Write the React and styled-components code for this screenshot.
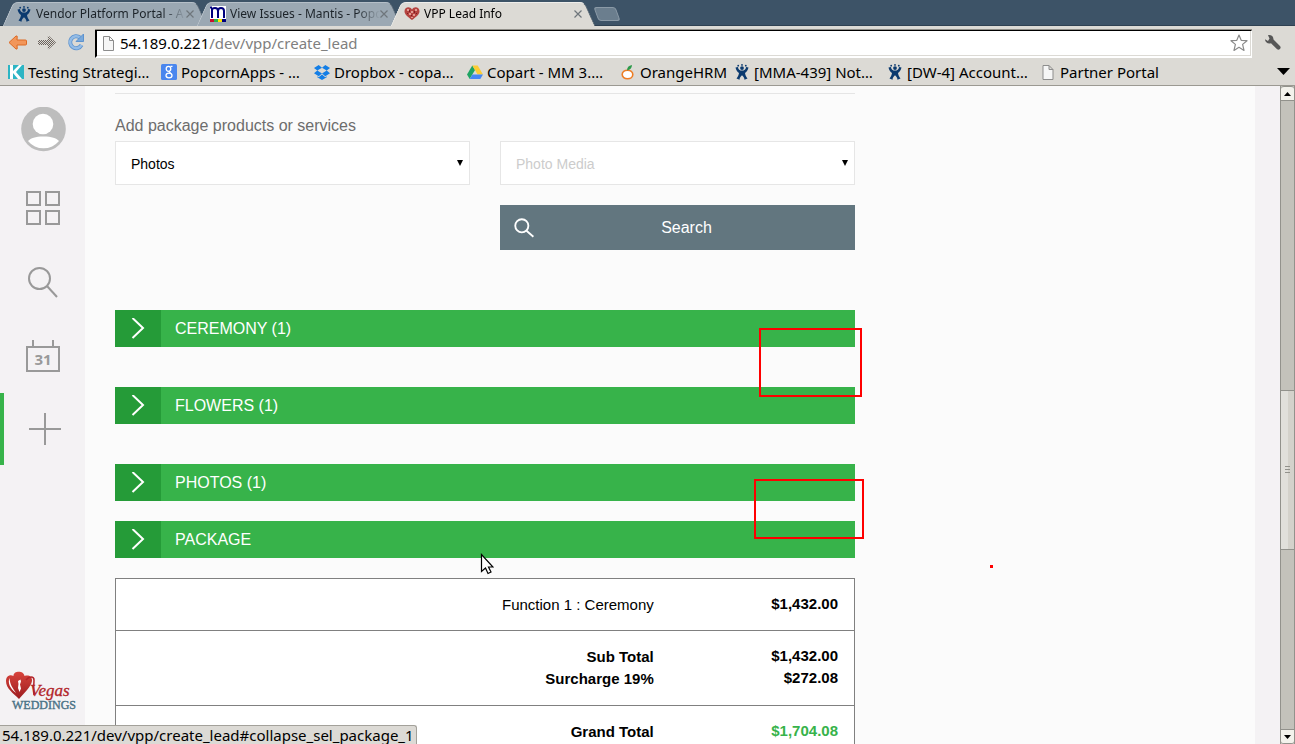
import React from "react";
import styled, { createGlobalStyle, css } from "styled-components";

const ui = '"Noto Sans", "Open Sans", sans-serif';
const body = '"Liberation Sans", Arial, sans-serif';
const chrome = "#dcdad5";
const green = "#37b34a";

const Global = createGlobalStyle`
  *, *::before, *::after { box-sizing: border-box; }
  body { margin: 0; overflow: hidden; font-family: ${body}; }
  button, select, input { font: inherit; margin: 0; }
  svg { display: block; flex: none; }
`;

const Browser = styled.div`
  position: relative;
  display: flex;
  flex-direction: column;
  height: 100vh;
  overflow: hidden;
  background: ${chrome};
`;

/* ---------- tab strip ---------- */
const TabStrip = styled.div`
  display: flex;
  align-items: flex-end;
  height: 26px;
  padding-left: 8px;
  background: #3d5367;
  border-bottom: 1px solid #2f4152;
`;

const Tab = styled.div`
  position: relative;
  z-index: ${(p) => (p.$active ? 2 : 1)};
  display: flex;
  align-items: center;
  width: 194px;
  height: 24px;
  margin-bottom: -1px;
  padding: 0 8px;
  font: 12px/22px ${ui};
  color: ${(p) => (p.$active ? "#000" : "#1c2329")};
  &::before,
  &::after {
    content: "";
    position: absolute;
    z-index: -1;
    top: 0;
    bottom: 0;
    width: 55%;
    background: ${(p) => (p.$active ? chrome : "#9ba8b3")};
    border-top: 1px solid ${(p) => (p.$active ? "#efeeeb" : "#b5bfc8")};
  }
  &::before {
    left: 0;
    transform: skewX(-24deg);
    border-left: 1px solid ${(p) => (p.$active ? "#efeeeb" : "#c3cbd2")};
    border-top-left-radius: 5px;
  }
  &::after {
    right: 0;
    transform: skewX(24deg);
    border-right: 1px solid ${(p) => (p.$active ? "#55636f" : "#5d6b78")};
    border-top-right-radius: 5px;
  }
`;

const TabTitle = styled.span`
  flex: 1;
  min-width: 0;
  margin-left: 4px;
  white-space: nowrap;
  mask-image: linear-gradient(to right, #000 84%, transparent);
`;

const CloseButton = styled.button`
  padding: 0;
  border: 0;
  background: none;
`;

const NewTab = styled.button`
  width: 22px;
  height: 14px;
  margin: 0 0 4px 6px;
  padding: 0;
  border: 1px solid #8b9aa7;
  border-radius: 3px;
  background: #6b7e8e;
  transform: skewX(20deg);
`;

/* ---------- toolbar ---------- */
const Toolbar = styled.div`
  display: flex;
  align-items: center;
  height: 32px;
  padding: 0 13px 0 8px;
`;

const ToolButton = styled.button`
  margin-right: ${(p) => p.$gap || 0}px;
  padding: 0;
  border: 0;
  background: none;
`;

const AddressBar = styled.div`
  display: flex;
  flex: 1;
  align-items: center;
  height: 28px;
  margin: 3px 12px 0 0;
  padding: 0 3px 0 5px;
  background: #fff;
  border-top: 1px solid #000;
  border-left: 2px solid #000;
  border-bottom: 2px solid #fff;
  border-right: 1px solid #fff;
  box-shadow: 0 -1px #8f8d87, inset 0 -1px #dcdad5, inset -1px 0 #dcdad5;
`;

const Url = styled.span`
  flex: 1;
  margin-left: 5px;
  font: 15px/22px ${ui};
  color: #808080;
`;

const Host = styled.span`
  color: #000;
`;

const Bookmarks = styled.nav`
  display: flex;
  align-items: center;
  height: 28px;
  padding: 0 5px 0 8px;
  border-bottom: 1px solid #9b9992;
`;

const Bookmark = styled.a`
  display: flex;
  align-items: center;
  gap: 4px;
  width: ${(p) => p.$width}px;
  font: 15px/22px ${ui};
  color: #000;
  text-decoration: none;
  white-space: nowrap;
`;

const MoreButton = styled.button`
  margin-left: auto;
  padding: 0;
  border: 0;
  background: none;
`;

/* ---------- page ---------- */
const Viewport = styled.div`
  position: relative;
  display: flex;
  flex: 1;
  min-height: 0;
  overflow: hidden;
  background: #f4f2f4;
`;

const Sidebar = styled.aside`
  display: flex;
  flex: none;
  flex-direction: column;
  width: 85px;
  padding: 21px 0 30px;
`;

const Avatar = styled.a`
  margin: 0 0 19px 21px;
`;

const SideNav = styled.nav`
  display: flex;
  flex-direction: column;
`;

const NavItem = styled.a`
  display: flex;
  align-items: center;
  height: 74px;
  padding-left: 25px;
  ${(p) =>
    p.$active &&
    css`
      height: 72px;
      padding-left: 21px;
      border-left: 4px solid ${green};
    `}
`;

const Logo = styled.a`
  margin: auto 0 0 5px;
`;

const Main = styled.main`
  flex: 1;
  min-width: 0;
  margin-right: 25px;
  padding: 7px 30px 0;
  background: #fbfbfb;
`;

const Column = styled.div`
  max-width: 740px;
`;

const Rule = styled.hr`
  height: 1px;
  margin: 0;
  border: 0;
  background: #e5e5e5;
`;

const Heading = styled.h2`
  margin: 22px 0 5px;
  font: 16px/20px ${body};
  color: #6d6d6d;
`;

const SearchForm = styled.form`
  display: grid;
  grid-template-columns: 1fr 1fr;
  gap: 20px 30px;
  margin-bottom: 60px;
`;

const SelectBox = styled.div`
  display: grid;
  align-items: center;
  & > * { grid-area: 1 / 1; }
  & > svg { justify-self: end; margin-right: 7px; pointer-events: none; }
`;

const Select = styled.select`
  width: 100%;
  height: 44px;
  padding: 2px 15px 0;
  appearance: none;
  border: 1px solid #e6e6e6;
  border-radius: 0;
  background: #fff;
  font-size: 14px;
  color: ${(p) => (p.$muted ? "#ccc" : "#000")};
`;

const SearchButton = styled.button`
  display: grid;
  grid-template-columns: 20px 1fr;
  grid-column: 2;
  align-items: center;
  height: 45px;
  padding: 1px 16px 0 14px;
  border: 0;
  background: #62767f;
  font-size: 16px;
  color: #fff;
`;

const Section = styled.button`
  display: flex;
  align-items: center;
  width: 100%;
  height: 37px;
  margin-bottom: ${(p) => (p.$tight ? 20 : 40)}px;
  padding: 0;
  border: 0;
  background: ${green};
  font-size: 16px;
  color: #fff;
`;

const SectionIcon = styled.span`
  display: flex;
  align-items: center;
  justify-content: center;
  width: 46px;
  height: 100%;
  margin-right: 14px;
  background: #259b38;
`;

const Totals = styled.table`
  width: 100%;
  border-collapse: collapse;
  background: #fff;
  border: 1px solid #808080;
  font-size: 15px;
  line-height: 22px;
  color: #000;
`;

const Group = styled.tbody`
  border-bottom: 1px solid #808080;
  & > tr:first-child > * { padding-top: 15px; }
  & > tr:last-child > * { padding-bottom: 15px; }
  & > tr:only-child > * { padding-bottom: 14px; }
`;

const LabelCell = styled.th`
  width: 75%;
  padding: 0 16px;
  text-align: right;
  font-weight: ${(p) => (p.$plain ? 400 : 700)};
`;

const ValueCell = styled.td`
  padding: 0 16px;
  vertical-align: top;
  text-align: right;
  font-weight: 700;
  line-height: 20px;
  color: ${(p) => (p.$total ? green : "#000")};
`;

/* ---------- scrollbar ---------- */
const Scrollbar = styled.div`
  display: flex;
  flex: none;
  flex-direction: column;
  width: 15px;
  border: solid #92928c;
  border-width: 0 1px;
  background: #c3c2bb;
`;

const ScrollButton = styled.button`
  display: flex;
  align-items: center;
  justify-content: center;
  height: 15px;
  padding: 0;
  border: 1px solid #92928c;
  border-width: 1px 0;
  border-radius: ${(p) => (p.$bottom ? "0 0 3px 3px" : "3px 3px 0 0")};
  background: #f3f2ec;
`;

const Track = styled.div`
  flex: ${(p) => p.$share};
`;

const Thumb = styled.div`
  display: flex;
  flex: 158;
  align-items: center;
  justify-content: center;
  border: 1px solid #92928c;
  border-width: 1px 0;
  background: linear-gradient(to right, #e1e0db 55%, #d4d2cb 55%);
`;

/* ---------- overlays ---------- */
const Mark = styled.div`
  position: absolute;
  left: ${(p) => p.$x}px;
  top: ${(p) => p.$y}px;
  width: ${(p) => p.$w}px;
  height: ${(p) => p.$h}px;
  border: 2px solid #f00;
`;

const Dot = styled.div`
  position: absolute;
  left: 990px;
  top: 479px;
  width: 3px;
  height: 3px;
  background: #f00;
`;

const Pointer = styled.svg`
  position: absolute;
  left: 480px;
  top: 467px;
`;

const StatusBubble = styled.div`
  position: absolute;
  left: 0;
  bottom: 0;
  height: 19px;
  padding: 0 2px;
  border: 1px solid #a3a19a;
  border-width: 1px 1px 0 0;
  border-top-right-radius: 3px;
  background: ${chrome};
  font: 15px/18px ${ui};
  color: #000;
`;

/* ---------- icons ---------- */
const Jira = () => (
  <svg width="16" height="16" viewBox="0 0 16 16" fill="#0b3a6f">
    <circle cx="4.2" cy="1.7" r=".9" /><circle cx="8" cy=".9" r=".9" /><circle cx="11.8" cy="1.7" r=".9" />
    <circle cx="8" cy="4.1" r="1.9" />
    <path d="M1.5 3.5 4 2.9C4.2 5.4 5.8 6.6 8 6.6s3.8-1.2 4-3.7l2.500.6c-.6 2.500-1.700 4.300-3.500 5.500.3 2.200 1.200 3.700 2.500 5.500l-3 1.200c-.2-2-1-3.300-2.500-4.500-1.500 1.200-2.300 2.500-2.500 4.500l-3-1.200c1.300-1.800 2.200-3.300 2.500-5.500C3.200 7.800 2.100 6 1.500 3.500z" />
  </svg>
);
const Mantis = () => (
  <svg width="16" height="16" viewBox="0 0 16 16">
    <path fill="#fff" d="M0 0h16v13H0z" />
    <path fill="none" stroke="#00007c" strokeWidth="2" d="M2 12V2M2 4q0-2 3-2t3 3v7M8 5q0-3 3-3t3 3v7M0 1.500h2" />
    <path fill="#c8102e" d="M0 13h4v3H0z" /><path fill="#2bb24c" d="M4 13h4v3H4z" />
    <path fill="#ffe600" d="M8 13h4v3H8z" /><path fill="#00007c" d="M12 13h4v3h-4z" />
  </svg>
);
const Heart = () => (
  <svg width="16" height="16" viewBox="0 0 16 16">
    <path fill="#b5433f" d="M8 14C4 11 .5 8.500.5 5.200.5 1 6 0 8 3.500 10 0 15.500 1 15.500 5.200 15.500 8.500 12 11 8 14z" />
    <path fill="#e39a92" d="M3 3h2v2H3zM7 5h2v2H7zM11 3h2v2h-2zM5 7h2v2H5zM9 8h2v2H9zM7 11h2v1H7z" />
    <path fill="#7c1c22" d="M5 4h1v2H5zM10 5h1v2h-1zM3 7h1v1H3zM12 7h1v1h-1zM7 9h1v1H7z" />
  </svg>
);
const Close = () => (
  <svg width="8" height="8" viewBox="0 0 8 8" stroke="#6f767c" strokeWidth="1.200"><path d="M.5.5l7 7M7.500.5l-7 7" /></svg>
);
const Back = () => (
  <svg width="20" height="16" viewBox="0 0 20 16">
    <path d="M1 8.500L8 2q1.500-.5 1.200 1L9 6h8.500q1 0 1 1v3q0 1-1 1H9l.2 3q.3 1.500-1.200 1z" fill="#f2965a" stroke="#dd6a24" strokeLinejoin="round" />
  </svg>
);
const Forward = () => (
  <svg width="20" height="16" viewBox="0 0 20 16">
    <defs><pattern id="stipple" width="2" height="2" patternUnits="userSpaceOnUse"><path d="M0 0h1v1H0zM1 1h1v1H1z" fill="#6b625c" /></pattern></defs>
    <path d="M19 8.500L12 2q-1.500-.5-1.200 1L11 6H2q-1 0-1 1v3q0 1 1 1h9l-.2 3q-.3 1.500 1.200 1z" fill="url(#stipple)" />
  </svg>
);
const Reload = () => (
  <svg width="18" height="18" viewBox="0 0 18 18">
    <path d="M14.500 12A6 6 0 1 1 13 4.600" fill="none" stroke="#5d93cf" strokeWidth="4" />
    <path d="M14.500 12A6 6 0 1 1 13 4.600" fill="none" stroke="#94bce6" strokeWidth="2.400" />
    <path d="M16.500 1v7.500H9z" fill="#79a9dc" stroke="#5d93cf" />
  </svg>
);
const Page = ({ size = 15 }) => (
  <svg width={size} height="16" viewBox="0 0 13 16"><path d="M1.500 1.500h6l4 4v10h-10zM7.500 1.500v4h4" fill="#f6f6f6" stroke="#8d8d8d" /></svg>
);
const Star = () => (
  <svg width="18" height="18" viewBox="0 0 18 18"><path d="M9 1l2.200 5.300 5.800.4-4.400 3.700 1.400 6L9 13.300 4 16.400l1.400-6L1 6.700l5.800-.4z" fill="#fff" stroke="#8a8a8a" strokeWidth="1.200" strokeLinejoin="round" /></svg>
);
const Wrench = () => (
  <svg width="18" height="17" viewBox="0 0 18 17">
    <path d="M5.500 4.500L4 1.200C6.500.5 9.500 2 9.500 5.500l6.700 6.800q1 1.600-.3 2.800t-2.800.2L7 9.300C4 10.300 1 8.300 1 5.300l3 1.600z" fill="#575757" />
  </svg>
);
const Kee = () => (
  <svg width="16" height="16" viewBox="0 0 16 16"><path fill="#2db5c4" d="M0 1h16v14H0z" /><path fill="#fff" d="M2 1h3v6l6-6h3L8 8l6 7h-4L5 9v6H2z" /></svg>
);
const Google = () => (
  <svg width="16" height="16" viewBox="0 0 16 16">
    <rect width="16" height="16" rx="1.500" fill="#4a86ee" />
    <g fill="none" stroke="#fff" strokeWidth="1.300"><ellipse cx="7.500" cy="4.800" rx="2.300" ry="2.500" /><ellipse cx="8" cy="11.500" rx="3" ry="2.300" /><path d="M9.500 2.300h2M8 7.300l1.500 2" /></g>
  </svg>
);
const Dropbox = () => (
  <svg width="16" height="16" viewBox="0 0 16 16" fill="#137ee6"><path d="M4.700 1L0 4l3.300 2.600L8 3.700zM11.300 1L16 4l-3.300 2.600L8 3.700zM0 9.300l4.700 3L8 9.600 3.300 6.600zM16 9.300l-4.700 3L8 9.600l4.700-3zM8 10.500l-3.300 2.700-1.400-.9v1L8 16l4.700-2.700v-1l-1.400.9z" /></svg>
);
const Drive = () => (
  <svg width="16" height="16" viewBox="0 0 16 16"><path d="M5.300 1.500L0 10.500l2.700 4.500L8 6z" fill="#1fa463" /><path d="M5.300 1.500h5.400l5.300 9h-5.400z" fill="#fccc33" /><path d="M2.700 15l2.700-4.500H16L13.300 15z" fill="#4587f4" /></svg>
);
const Orange = () => (
  <svg width="16" height="16" viewBox="0 0 16 16">
    <ellipse cx="7.500" cy="10.500" rx="5.300" ry="4.300" fill="#fff" stroke="#ee7d23" strokeWidth="1.600" />
    <path d="M7 6.500c0-3 1.500-5 5-5.500C12 4 10 6 7 6.500z" fill="#2c9a4a" />
  </svg>
);
const Lens = ({ size, color, width }) => (
  <svg width={size} height={size} viewBox="0 0 32 32" fill="none" stroke={color} strokeWidth={width}><circle cx="12.500" cy="12.500" r="10.500" /><path d="M20 20.500l11 9.500" /></svg>
);
const Chevron = () => (
  <svg width="14" height="21" viewBox="0 0 14 21" fill="none" stroke="#fff" strokeWidth="2"><path d="M1.500 0l10.500 10L1.500 20" /></svg>
);
const Triangle = ({ up, w, h }) => (
  <svg width={w} height={h} viewBox="0 0 10 10" preserveAspectRatio="none"><path d={up ? "M0 10h10L5 0z" : "M0 0h10L5 10z"} /></svg>
);
const Brand = () => (
  <svg width="78" height="44" viewBox="0 0 78 44" role="img" aria-label="Vegas Weddings">
    <defs><linearGradient id="ruby" x1="0" y1="0" x2="0" y2="1"><stop offset="0" stopColor="#d8443c" /><stop offset="1" stopColor="#9c1c20" /></linearGradient></defs>
    <path d="M14 29C8 23 1 18.500 1 11 1 6 5 4 8.500 6 8 .5 19 0 19.500 6c4-1.500 8 .5 7.500 5C26 17 19 23 14 29z" fill="url(#ruby)" />
    <path d="M4.500 8C2.500 13 5 18.500 11 23c-3-4.500-6-8-6.500-15zM13 11l2.500-1.500.5 2-1 3 1 4-1.500 3.500-1.500-4 .5-4z" fill="#fff" />
    <path d="M21 10c3-4 8-4 8 0 0 5-1 10 0 15" fill="none" stroke="#b2242a" strokeWidth="1.500" />
    <text x="25" y="26" fontFamily="Liberation Serif, serif" fontStyle="italic" fontSize="17" fill="#b2242a" stroke="#b2242a" strokeWidth=".3">Vegas</text>
    <text x="7" y="39" fontFamily="Liberation Serif, serif" fontSize="12" fill="#4b7386" stroke="#4b7386" strokeWidth=".4">WEDDINGS</text>
  </svg>
);

const tabs = [
  { title: "Vendor Platform Portal - A", icon: <Jira /> },
  { title: "View Issues - Mantis - Popc", icon: <Mantis /> },
  { title: "VPP Lead Info", icon: <Heart />, active: true },
];

const bookmarks = [
  { label: "Testing Strategi…", icon: <Kee />, width: 153 },
  { label: "PopcornApps - …", icon: <Google />, width: 153 },
  { label: "Dropbox - copa…", icon: <Dropbox />, width: 153 },
  { label: "Copart - MM 3.…", icon: <Drive />, width: 153 },
  { label: "OrangeHRM", icon: <Orange />, width: 114 },
  { label: "[MMA-439] Not…", icon: <Jira />, width: 153 },
  { label: "[DW-4] Account…", icon: <Jira />, width: 153 },
  { label: "Partner Portal", icon: <Page size={16} />, width: 153 },
];

const sections = [
  { title: "CEREMONY (1)" },
  { title: "FLOWERS (1)" },
  { title: "PHOTOS (1)", tight: true },
  { title: "PACKAGE", tight: true },
];

export default function App() {
  return (
    <Browser>
      <Global />
      <TabStrip>
        {tabs.map((t) => (
          <Tab key={t.title} $active={t.active}>
            {t.icon}
            <TabTitle>{t.title}</TabTitle>
            <CloseButton aria-label="Close tab"><Close /></CloseButton>
          </Tab>
        ))}
        <NewTab aria-label="New tab" />
      </TabStrip>
      <Toolbar>
        <ToolButton $gap={9} aria-label="Back"><Back /></ToolButton>
        <ToolButton $gap={10} aria-label="Forward"><Forward /></ToolButton>
        <ToolButton $gap={10} aria-label="Reload"><Reload /></ToolButton>
        <AddressBar>
          <Page size={13} />
          <Url><Host>54.189.0.221</Host>/dev/vpp/create_lead</Url>
          <Star />
        </AddressBar>
        <ToolButton aria-label="Settings"><Wrench /></ToolButton>
      </Toolbar>
      <Bookmarks>
        {bookmarks.map((b) => (
          <Bookmark key={b.label} href="#" $width={b.width}>{b.icon}{b.label}</Bookmark>
        ))}
        <MoreButton aria-label="More bookmarks"><Triangle w={13} h={7} /></MoreButton>
      </Bookmarks>

      <Viewport>
        <Sidebar>
          <Avatar href="#" aria-label="Profile">
            <svg width="45" height="45" viewBox="0 0 45 45">
              <circle cx="22.500" cy="22" r="22.300" fill="#bdbdbd" />
              <circle cx="22" cy="17" r="10.300" fill="#fff" />
              <path d="M7 34c3-3 7-4.500 15.500-4.500S35 31 38 34a20 20 0 0 1-31 0z" fill="#fff" />
            </svg>
          </Avatar>
          <SideNav>
            <NavItem href="#" aria-label="Dashboard">
              <svg width="36" height="36" viewBox="0 0 36 36" fill="none" stroke="#999" strokeWidth="2"><path d="M2 2h13v13H2zM21 2h13v13H21zM2 21h13v13H2zM21 21h13v13H21z" /></svg>
            </NavItem>
            <NavItem href="#" aria-label="Search">
              <svg width="36" height="36" viewBox="0 0 36 36" fill="none" stroke="#999" strokeWidth="2"><circle cx="14.500" cy="14.500" r="10.500" /><path d="M22 22l10 11" /></svg>
            </NavItem>
            <NavItem href="#" aria-label="Calendar">
              <svg width="36" height="36" viewBox="0 0 36 36" fill="none" stroke="#999" strokeWidth="2">
                <path d="M2 9h32v24H2zM8 2v7M28 2v7" />
                <text x="18" y="27" textAnchor="middle" fontFamily="Open Sans, sans-serif" fontWeight="700" fontSize="15" fill="#999" stroke="none">31</text>
              </svg>
            </NavItem>
            <NavItem href="#" aria-label="Create lead" $active>
              <svg width="40" height="36" viewBox="0 0 40 36" fill="none" stroke="#999" strokeWidth="2"><path d="M4 18h32M20 2v32" /></svg>
            </NavItem>
          </SideNav>
          <Logo href="#"><Brand /></Logo>
        </Sidebar>

        <Main>
          <Column>
            <Rule />
            <Heading>Add package products or services</Heading>
            <SearchForm onSubmit={(e) => e.preventDefault()}>
              <SelectBox>
                <Select aria-label="Product"><option>Photos</option></Select>
                <Triangle w={6} h={6} />
              </SelectBox>
              <SelectBox>
                <Select aria-label="Media" $muted><option>Photo Media</option></Select>
                <Triangle w={6} h={6} />
              </SelectBox>
              <SearchButton><Lens size={20} color="#fff" width={3} />Search</SearchButton>
            </SearchForm>
            {sections.map((s) => (
              <Section key={s.title} $tight={s.tight}>
                <SectionIcon><Chevron /></SectionIcon>
                {s.title}
              </Section>
            ))}
            <Totals>
              <Group>
                <tr><LabelCell scope="row" $plain>Function 1 : Ceremony</LabelCell><ValueCell>$1,432.00</ValueCell></tr>
              </Group>
              <Group>
                <tr><LabelCell scope="row">Sub Total</LabelCell><ValueCell>$1,432.00</ValueCell></tr>
                <tr><LabelCell scope="row">Surcharge 19%</LabelCell><ValueCell>$272.08</ValueCell></tr>
              </Group>
              <Group>
                <tr><LabelCell scope="row">Grand Total</LabelCell><ValueCell $total>$1,704.08</ValueCell></tr>
              </Group>
            </Totals>
          </Column>
        </Main>

        <Scrollbar>
          <ScrollButton aria-label="Scroll up"><Triangle up w={7} h={4} /></ScrollButton>
          <Track $share={290} />
          <Thumb>
            <svg width="5" height="7" viewBox="0 0 5 7" fill="#92928c"><path d="M0 0h5v1H0zM0 3h5v1H0zM0 6h5v1H0z" /></svg>
          </Thumb>
          <Track $share={180} />
          <ScrollButton $bottom aria-label="Scroll down"><Triangle w={7} h={4} /></ScrollButton>
        </Scrollbar>

        <Mark $x={759} $y={242} $w={103} $h={69} />
        <Mark $x={754} $y={393} $w={110} $h={60} />
        <Dot />
        <Pointer width="14" height="22" viewBox="0 0 14 22">
          <path d="M1.500 1.500v17l4-3.500 2.500 5.500 3-1.500-2.500-5h4.500z" fill="#fff" stroke="#000" strokeWidth="1.200" />
        </Pointer>
      </Viewport>
      <StatusBubble>54.189.0.221/dev/vpp/create_lead#collapse_sel_package_1</StatusBubble>
    </Browser>
  );
}
